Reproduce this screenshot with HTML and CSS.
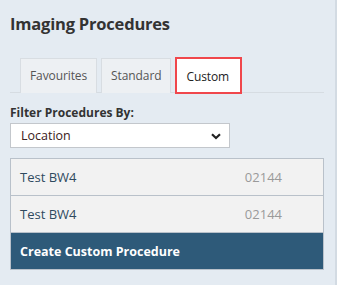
FILE: index.html
```html
<!DOCTYPE html>
<html lang="en">
<head>
  <meta charset="UTF-8" />
  <title>Imaging Procedures</title>
  <link rel="stylesheet" href="styles.css">
</head>
<body>
  <div class="panel">
    <h1 class="title">Imaging Procedures</h1>
    <!-- Procedure type tabs -->
    <ul class="tabs">
      <li class="tab">Favourites</li>
      <li class="tab">Standard</li>
      <li class="tab active">Custom</li>
    </ul>
    <label class="filter-label" for="filterBy">Filter Procedures By:</label>
    <div class="select-wrap">
      <select id="filterBy" class="filter-select">
        <option>Location</option>
      </select>
      <svg class="chevron" width="10" height="7" viewBox="0 0 10 7">
        <path d="M1 1.2 L5 5 L9 1.2" fill="none" stroke="#222" stroke-width="2.2"/>
      </svg>
    </div>
    <!-- Custom procedure list -->
    <ul class="proc-list">
      <li class="proc-item"><span class="proc-name">Test BW4</span><span class="proc-code">02144</span></li>
      <li class="proc-item"><span class="proc-name">Test BW4</span><span class="proc-code">02144</span></li>
      <li class="proc-item create">Create Custom Procedure</li>
    </ul>
  </div>
</body>
</html>
```

FILE: styles.css
```css
* {
  margin: 0;
  padding: 0;
  box-sizing: border-box;
}
body {
  font-family: "Open Sans", "Noto Sans", Arial, sans-serif;
  background: #e4ebf2;
  width: 337px;
  height: 285px;
  overflow: hidden;
}
.panel {
  width: 337px;
  height: 285px;
  padding: 12px 11px 0 10px;
  border-right: 2px solid #d3dbe3;
}
.title {
  font-size: 16.5px;
  font-weight: 700;
  color: #333;
  line-height: 24px;
  letter-spacing: -0.2px;
}
/* Tabs */
.tabs {
  list-style: none;
  display: flex;
  gap: 4px;
  margin-top: 22px;
  padding-left: 10px;
  border-bottom: 1px solid #d6dce2;
  height: 35px;
}
.tab {
  height: 35px;
  padding: 0 9px;
  font-size: 12px;
  line-height: 33px;
  letter-spacing: -0.1px;
  color: #555;
  background: #edf0f3;
  border: 1px solid #d8dde2;
  border-bottom: none;
}
.tab.active {
  height: 37px;
  margin-top: -1px;
  padding: 0 11px 0 9px;
  line-height: 35px;
  background: #fff;
  color: #222;
  border: 2px solid #f0474c;
}
/* Filter */
.filter-label {
  display: block;
  margin-top: 11px;
  font-size: 12px;
  font-weight: 700;
  color: #333;
  line-height: 18px;
}
.select-wrap {
  position: relative;
  width: 220px;
  margin-top: 1px;
}
.filter-select {
  appearance: none;
  width: 220px;
  height: 25px;
  padding: 0 0 0 10px;
  font-family: inherit;
  font-size: 12.5px;
  color: #3a2020;
  background: #fff;
  border: 1px solid #c3c7cc;
  border-radius: 0;
}
.chevron {
  position: absolute;
  right: 9px;
  top: 10px;
}
/* Procedure list */
.proc-list {
  list-style: none;
  margin-top: 10px;
  border: 1px solid #b9c1ca;
}
.proc-item {
  display: flex;
  justify-content: space-between;
  align-items: center;
  height: 37px;
  padding: 0 41px 0 9px;
  background: #f2f2f2;
  border-top: 1px solid #b9c1ca;
  font-size: 13px;
}
.proc-item:first-child {
  height: 36px;
  border-top: none;
}
.proc-name {
  color: #2f4a5f;
}
.proc-code {
  color: #9a9a9a;
}
.proc-item.create {
  background: #2e5a79;
  color: #fff;
  font-size: 12.5px;
  font-weight: 700;
}
```
